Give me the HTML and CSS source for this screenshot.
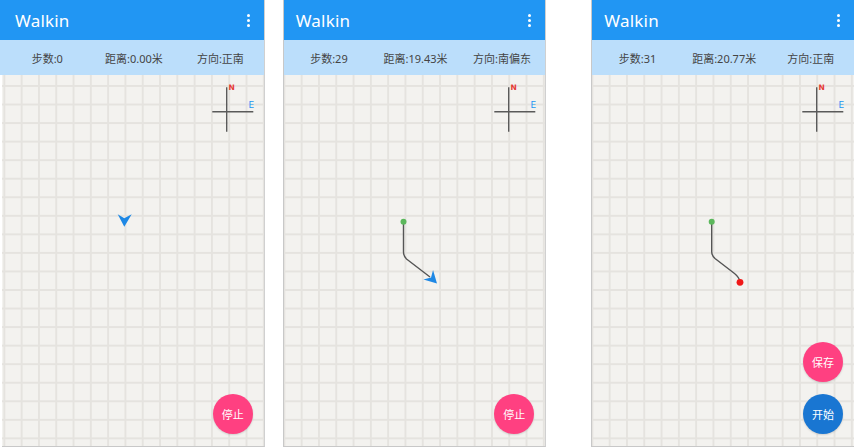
FILE: index.html
```html
<!DOCTYPE html>
<html lang="zh">
<head>
<meta charset="utf-8">
<title>Walkin</title>
<link rel="stylesheet" href="styles.css">
</head>
<body>
<div class="screens">
  <section class="phone phone-a">
    <header class="appbar"><span class="title">Walkin</span><span class="menu"><i></i><i></i><i></i></span></header>
    <div class="status"><span>步数:0</span><span>距离:0.00米</span><span>方向:正南</span></div>
    <div class="map map-a">
      <svg class="compass" width="50" height="56" viewBox="0 0 50 56"><line x1="16.7" y1="6.3" x2="16.7" y2="50.7"/><line x1="2.3" y1="30.7" x2="43.3" y2="30.7"/><text class="n" x="18.5" y="9">N</text><text class="e" x="38.5" y="27">E</text></svg>
      <svg class="track" width="262" height="371" viewBox="0 0 262 371"><polygon class="arrow" points="122.3,151.7 115.7,139.3 122.3,143.3 129.7,139.3"/></svg>
      <div class="fabs"><button class="fab pink">停止</button></div>
    </div>
  </section>
  <section class="phone phone-b">
    <header class="appbar"><span class="title">Walkin</span><span class="menu"><i></i><i></i><i></i></span></header>
    <div class="status"><span>步数:29</span><span>距离:19.43米</span><span>方向:南偏东</span></div>
    <div class="map">
      <svg class="compass" width="50" height="56" viewBox="0 0 50 56"><line x1="16.7" y1="6.3" x2="16.7" y2="50.7"/><line x1="2.3" y1="30.7" x2="43.3" y2="30.7"/><text class="n" x="18.5" y="9">N</text><text class="e" x="38.5" y="27">E</text></svg>
      <svg class="track" width="262" height="371" viewBox="0 0 262 371"><path class="line" d="M119.5 146.7 L119.5 177 Q119.5 181 122.5 184 L146 202"/><circle class="start" cx="119.5" cy="146.7" r="3"/><polygon class="arrow" transform="translate(153,208.5) rotate(-45)" points="0,0 -6.8,-12.4 0,-8.4 6.8,-12.4"/></svg>
      <div class="fabs"><button class="fab pink">停止</button></div>
    </div>
  </section>
  <section class="phone phone-c">
    <header class="appbar"><span class="title">Walkin</span><span class="menu"><i></i><i></i><i></i></span></header>
    <div class="status"><span>步数:31</span><span>距离:20.77米</span><span>方向:正南</span></div>
    <div class="map">
      <svg class="compass" width="50" height="56" viewBox="0 0 50 56"><line x1="16.7" y1="6.3" x2="16.7" y2="50.7"/><line x1="2.3" y1="30.7" x2="43.3" y2="30.7"/><text class="n" x="18.5" y="9">N</text><text class="e" x="38.5" y="27">E</text></svg>
      <svg class="track" width="262" height="371" viewBox="0 0 262 371"><path class="line" d="M119.7 146.7 L119.7 176.7 Q119.7 180.5 123 183.5 L142.5 198.5 Q147.5 202.5 148 207"/><circle class="start" cx="119.7" cy="146.7" r="3"/><circle class="end" cx="148" cy="207.3" r="3.4"/></svg>
      <div class="fabs"><button class="fab pink">保存</button><button class="fab blue">开始</button></div>
    </div>
  </section>
</div>
</body>
</html>
```
FILE: styles.css
```css
* { box-sizing: border-box; }
html, body { margin: 0; padding: 0; background: #ffffff; }
body {
  width: 854px;
  height: 448px;
  overflow: hidden;
  font-family: "Noto Sans", "Noto Sans CJK SC", sans-serif;
}
.screens {
  display: flex;
  align-items: flex-start;
  height: 448px;
}
.phone {
  width: 263px;
  height: 447px;
  display: flex;
  flex-direction: column;
  border-bottom: 1px solid #c8c8c8;
  background: #f3f2ef;
}
.phone-a {
  margin-left: 2px;
  border-right: 1px solid #d0d0d0;
  width: 263px;
}
.phone-b {
  margin-left: 18px;
  width: 264px;
  border-left: 1px solid #c8c8c8;
  border-right: 1px solid #d0d0d0;
}
.phone-c {
  margin-left: 45px;
  width: 263px;
  border-left: 1px solid #c8c8c8;
}
.appbar {
  height: 40px;
  flex: none;
  background: #2196f3;
  display: flex;
  align-items: center;
  justify-content: space-between;
  padding: 0 14px 0 15px;
  margin-left: -2px;
}
.phone-b .appbar, .phone-c .appbar { margin-left: 0; padding-left: 12px; }
.title {
  color: #ffffff;
  font-size: 17px;
  line-height: 20px;
  margin-top: 1px;
  letter-spacing: 0.2px;
}
.menu {
  display: flex;
  flex-direction: column;
  gap: 2px;
}
.menu i {
  display: block;
  width: 3px;
  height: 3px;
  border-radius: 50%;
  background: #ffffff;
}
.status {
  height: 35px;
  flex: none;
  background: #bbdefb;
  display: flex;
  align-items: center;
  margin-left: -2px;
  padding-left: 4px;
}
.phone-b .status, .phone-c .status { margin-left: 0; padding-left: 2px; }
.status span {
  flex: 1;
  text-align: center;
  font-size: 11px;
  color: #444444;
}
.map {
  flex: 1;
  position: relative;
  background-color: #f3f2ef;
  background-image:
    linear-gradient(to right, #e5e3df 0, #e5e3df 2px, transparent 2px),
    linear-gradient(to bottom, #e5e3df 0, #e5e3df 2px, transparent 2px);
  background-size: 17.3px 18.55px;
  background-position: -0.6px 10px;
}
.map-a { background-position: 1.4px 10px; }
.compass {
  position: absolute;
  left: 208px;
  top: 6px;
}
.compass line { stroke: #5a5a5a; stroke-width: 1.4; }
.compass text { font-family: "DejaVu Sans", sans-serif; font-weight: bold; font-size: 7.5px; }
.compass .n { fill: #e53935; }
.compass .e { fill: #2196f3; font-weight: normal; font-size: 9px; }
.track {
  position: absolute;
  left: 0;
  top: 0;
}
.line { fill: none; stroke: #555555; stroke-width: 1.4; stroke-linejoin: round; }
.start { fill: #5cb85c; }
.end { fill: #f01818; }
.arrow { fill: #1e88e5; }
.fabs {
  position: absolute;
  right: 11px;
  bottom: 12px;
  display: flex;
  flex-direction: column;
  gap: 12px;
}
.fab {
  width: 40px;
  height: 40px;
  border-radius: 50%;
  border: none;
  padding: 0;
  color: #ffffff;
  font-size: 11px;
  font-family: "Noto Sans CJK SC", sans-serif;
  box-shadow: 0 1px 2px rgba(0,0,0,0.15);
}
.pink { background: #ff4081; }
.blue { background: #1976d2; }
```
